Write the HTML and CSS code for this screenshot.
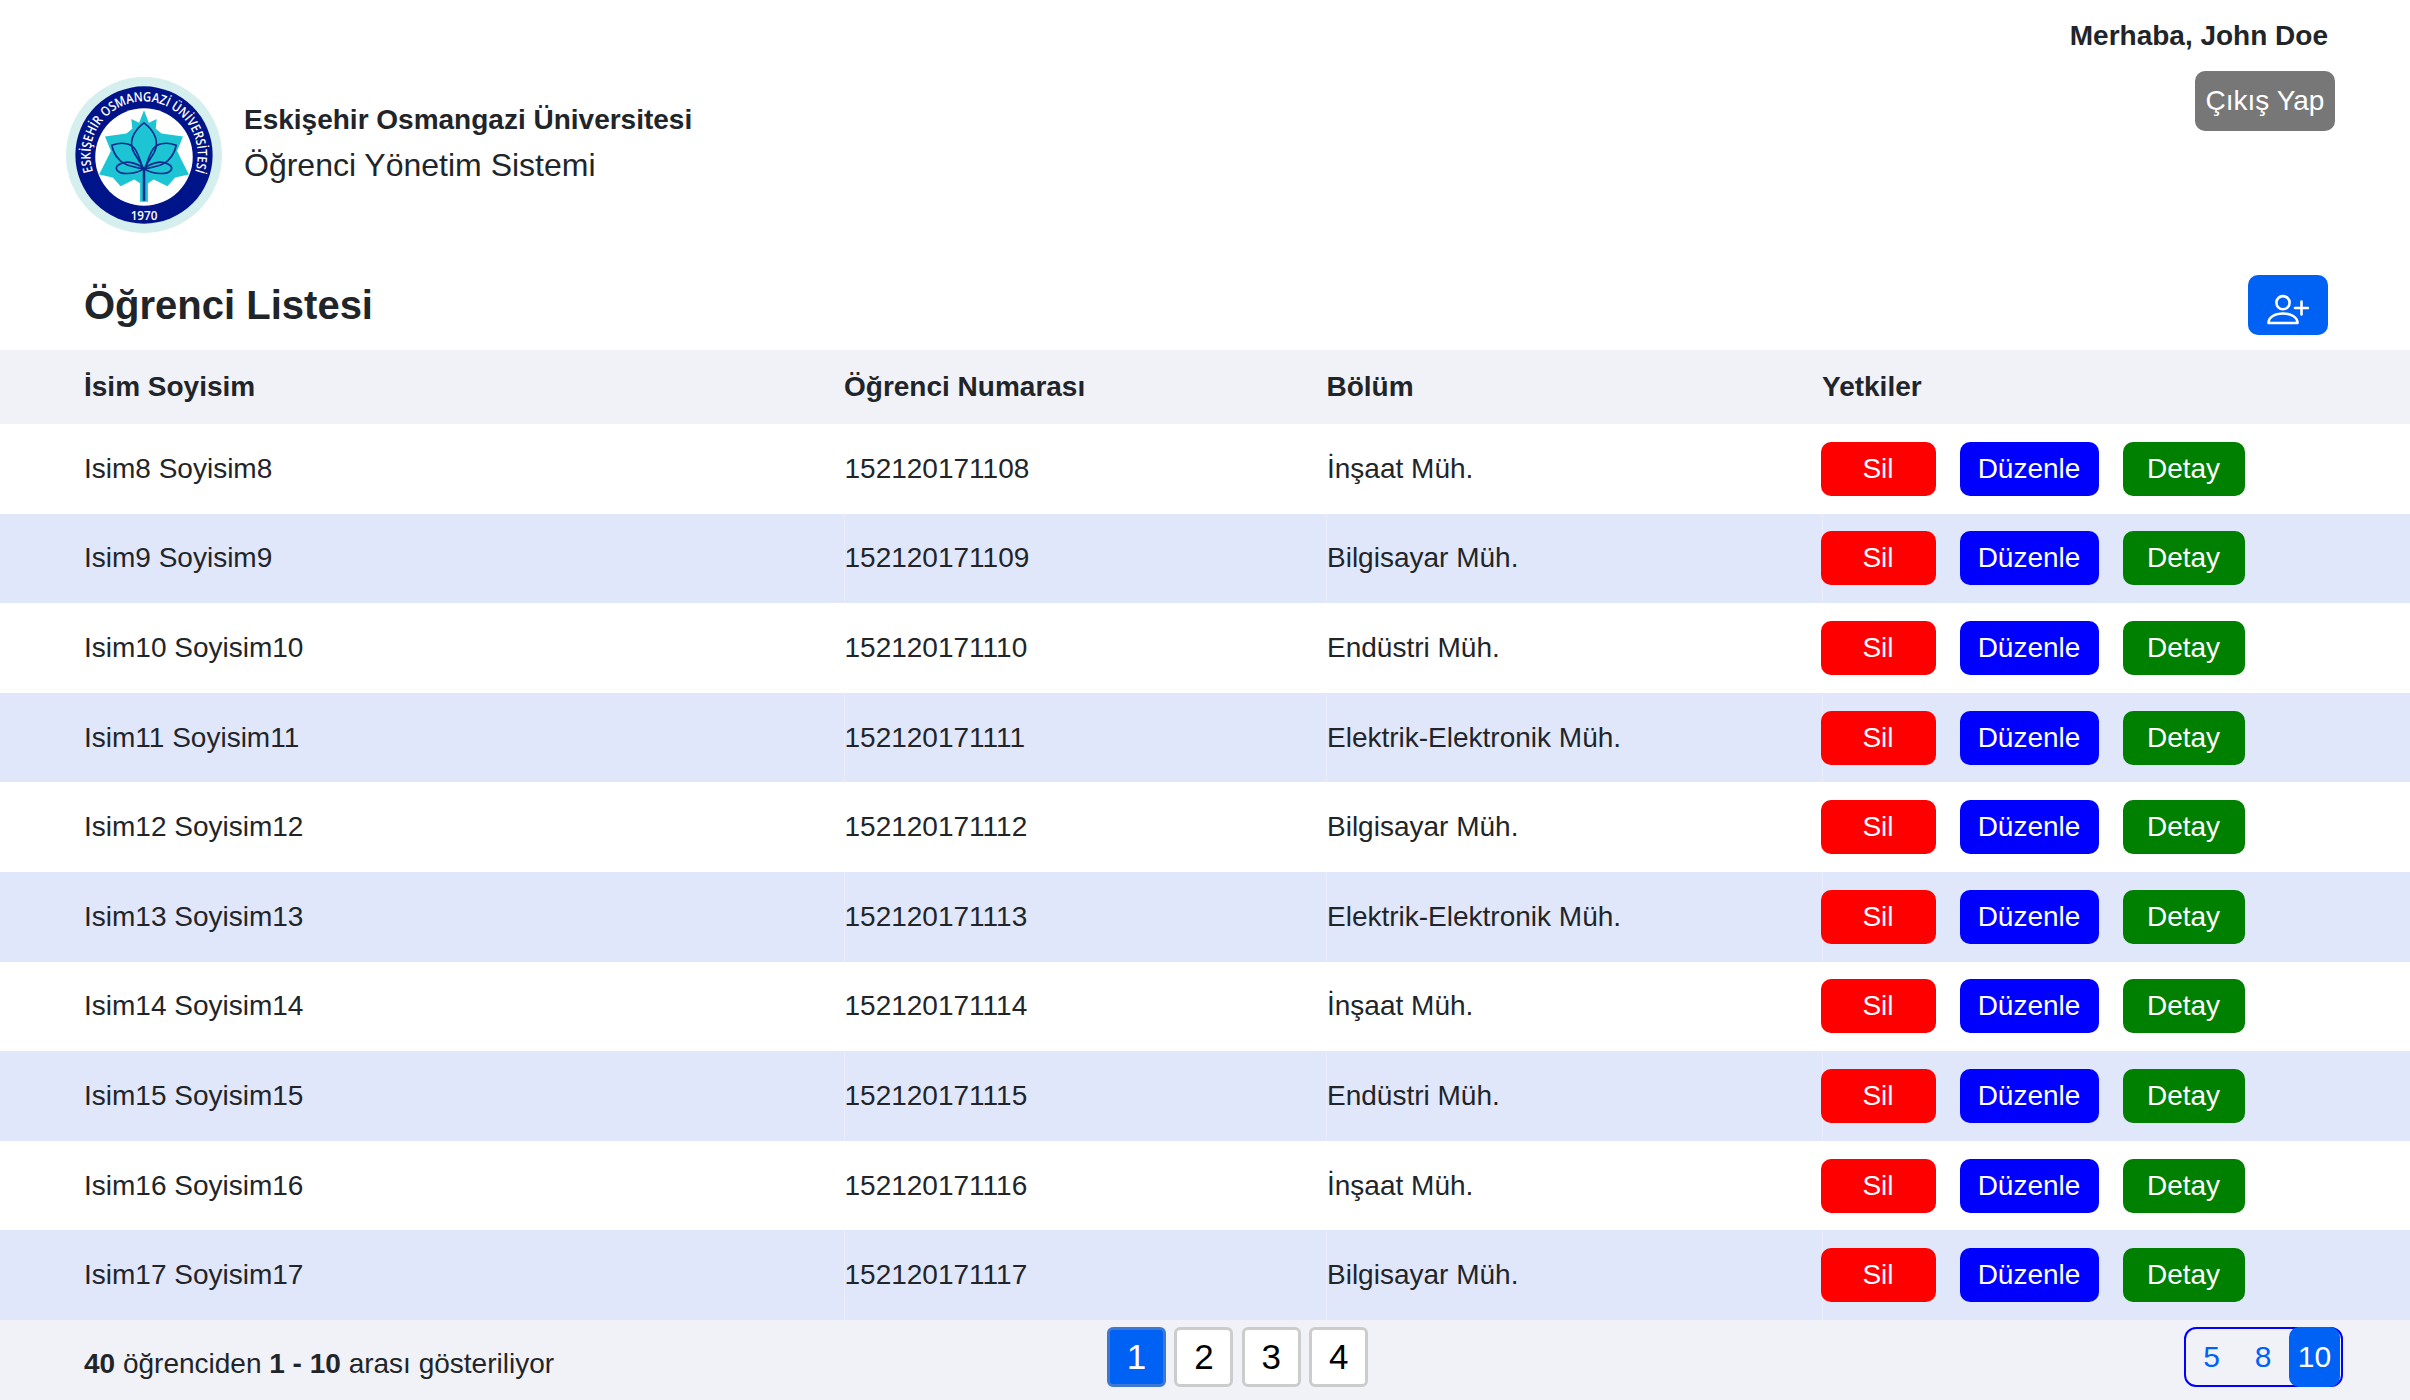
FILE: index.html
```html
<!DOCTYPE html>
<html lang="tr">
<head>
<meta charset="utf-8">
<title>Öğrenci Yönetim Sistemi</title>
<link rel="stylesheet" href="styles.css">
</head>
<body>
<header class="top">
  <div class="brand">
    <svg class="logo" viewBox="0 0 160 160" width="156" height="156" aria-hidden="true">
      <defs>
        <path id="arc" d="M27.7 97 A55 55 0 1 1 132.3 97"/>
      </defs>
      <circle cx="80" cy="80" r="80" fill="#d5efee"/>
      <circle cx="80" cy="80" r="70.4" fill="#00148a"/>
      <circle cx="80" cy="82" r="50" fill="#fff"/>
      <text class="logo-arc"><textPath href="#arc" startOffset="0" textLength="207" lengthAdjust="spacingAndGlyphs">ESKİŞEHİR OSMANGAZİ ÜNİVERSİTESİ</textPath></text>
      <text class="logo-year" x="80" y="147" text-anchor="middle">1970</text>
      <path fill="#1cc4d4" d="M80 34 L85 47 L93 43 L92 53 L98 58 L120 61 L114 76 L118 84 L126 100 L112 103 L104 112 L90 105 L84 109 L84 128 L76 128 L76 109 L70 105 L56 112 L48 103 L34 100 L42 84 L46 76 L40 61 L62 58 L68 53 L67 43 L75 47 Z"/>
      <g fill="none" stroke="#0a2a8c" stroke-width="1.7">
        <path d="M80 47 C68 56 64 68 70 78 C74 85 78 90 80 95 C82 90 86 85 90 78 C96 68 92 56 80 47 Z"/>
        <path d="M47 70 C58 66 68 68 72 76 C76 84 78 90 78 94 C68 92 58 90 54 84 C50 80 48 75 47 70 Z"/>
        <path d="M113 70 C102 66 92 68 88 76 C84 84 82 90 82 94 C92 92 102 90 106 84 C110 80 112 75 113 70 Z"/>
        <path d="M80 94 C70 86 60 86 54 90 C49 93 52 99 62 99 C70 99 76 97 80 94 C84 97 90 99 98 99 C108 99 111 93 106 90 C100 86 90 86 80 94 Z"/>
        <path d="M80 94 V127" stroke-width="2.6"/>
      </g>
    </svg>
    <div class="brand-text">
      <div class="uni">Eskişehir Osmangazi Üniversitesi</div>
      <div class="sys">Öğrenci Yönetim Sistemi</div>
    </div>
  </div>
  <div class="user">
    <div class="hello">Merhaba, John Doe</div>
    <button class="logout">Çıkış Yap</button>
  </div>
</header>
<section class="title-row">
  <h1>Öğrenci Listesi</h1>
  <button class="add" aria-label="Öğrenci ekle">
    <svg viewBox="0 0 42 32" width="42" height="32" fill="none" stroke="#fff" stroke-width="2.6" stroke-linecap="round" aria-hidden="true">
      <circle cx="16" cy="9.7" r="6.6"/>
      <path d="M1.5 30 C1.5 24 8 20.5 16 20.5 C24 20.5 30.5 24 30.5 30 Z" stroke-linejoin="round"/>
      <path d="M28 15 H41 M34.5 8.5 V21.5"/>
    </svg>
  </button>
</section>
<table class="list">
  <thead>
    <tr><th class="c1">İsim Soyisim</th><th class="c2">Öğrenci Numarası</th><th class="c3">Bölüm</th><th class="c4">Yetkiler</th></tr>
  </thead>
  <tbody>
    <tr><td>Isim8 Soyisim8</td><td>152120171108</td><td>İnşaat Müh.</td><td><div class="acts"><button class="b del">Sil</button><button class="b edit">Düzenle</button><button class="b info">Detay</button></div></td></tr>
    <tr><td>Isim9 Soyisim9</td><td>152120171109</td><td>Bilgisayar Müh.</td><td><div class="acts"><button class="b del">Sil</button><button class="b edit">Düzenle</button><button class="b info">Detay</button></div></td></tr>
    <tr><td>Isim10 Soyisim10</td><td>152120171110</td><td>Endüstri Müh.</td><td><div class="acts"><button class="b del">Sil</button><button class="b edit">Düzenle</button><button class="b info">Detay</button></div></td></tr>
    <tr><td>Isim11 Soyisim11</td><td>152120171111</td><td>Elektrik-Elektronik Müh.</td><td><div class="acts"><button class="b del">Sil</button><button class="b edit">Düzenle</button><button class="b info">Detay</button></div></td></tr>
    <tr><td>Isim12 Soyisim12</td><td>152120171112</td><td>Bilgisayar Müh.</td><td><div class="acts"><button class="b del">Sil</button><button class="b edit">Düzenle</button><button class="b info">Detay</button></div></td></tr>
    <tr><td>Isim13 Soyisim13</td><td>152120171113</td><td>Elektrik-Elektronik Müh.</td><td><div class="acts"><button class="b del">Sil</button><button class="b edit">Düzenle</button><button class="b info">Detay</button></div></td></tr>
    <tr><td>Isim14 Soyisim14</td><td>152120171114</td><td>İnşaat Müh.</td><td><div class="acts"><button class="b del">Sil</button><button class="b edit">Düzenle</button><button class="b info">Detay</button></div></td></tr>
    <tr><td>Isim15 Soyisim15</td><td>152120171115</td><td>Endüstri Müh.</td><td><div class="acts"><button class="b del">Sil</button><button class="b edit">Düzenle</button><button class="b info">Detay</button></div></td></tr>
    <tr><td>Isim16 Soyisim16</td><td>152120171116</td><td>İnşaat Müh.</td><td><div class="acts"><button class="b del">Sil</button><button class="b edit">Düzenle</button><button class="b info">Detay</button></div></td></tr>
    <tr><td>Isim17 Soyisim17</td><td>152120171117</td><td>Bilgisayar Müh.</td><td><div class="acts"><button class="b del">Sil</button><button class="b edit">Düzenle</button><button class="b info">Detay</button></div></td></tr>
  </tbody>
</table>
<footer class="foot">
  <div class="summary"><b>40</b> öğrenciden <b>1 - 10</b> arası gösteriliyor</div>
  <nav class="pages">
    <button class="pg on">1</button><button class="pg">2</button><button class="pg">3</button><button class="pg">4</button>
  </nav>
  <div class="sizes"><span class="sz">5</span><span class="sz">8</span><span class="sz on">10</span></div>
</footer>
</body>
</html>
```
FILE: styles.css
```css
* { box-sizing: border-box; }
html, body { margin: 0; padding: 0; height: 1400px; overflow: hidden; }
body { background: #fff; color: #212529; font-family: "Liberation Sans", Arial, sans-serif; font-size: 28px; }
button { font-family: inherit; border: 0; cursor: pointer; }

.top { height: 268px; display: flex; justify-content: space-between; padding: 20px 75px 0 66px; }
.brand { display: flex; align-items: center; gap: 22px; height: 156px; margin-top: 57px; }
.logo { flex: none; }
.logo-arc { font-size: 13.5px; font-weight: 600; fill: #fff; font-family: "Open Sans", "Liberation Sans", sans-serif; }
.logo-year { font-size: 12px; font-weight: 600; fill: #fff; font-family: "Open Sans", "Liberation Sans", sans-serif; }
.brand-text { margin-bottom: 22px; }
.uni { font-size: 28px; font-weight: 700; line-height: 40px; }
.sys { font-size: 32px; line-height: 46px; margin-top: 2px; }
.user { display: flex; flex-direction: column; align-items: flex-end; }
.hello { font-size: 28px; font-weight: 700; line-height: 32px; margin-right: 7px; }
.logout { margin-top: 19px; width: 140px; height: 60px; background: #777; color: #fff; font-size: 28px; border-radius: 10px; padding: 0; }

.title-row { height: 82px; display: flex; justify-content: space-between; align-items: flex-start; padding: 7px 82px 0 84px; }
h1 { margin: 0; font-size: 40px; font-weight: 700; line-height: 60px; color: #212529; }
.add { width: 80px; height: 60px; background: #0062f5; border-radius: 10px; display: flex; align-items: center; justify-content: center; padding: 8px 0 0; }

.list { width: 100%; border-collapse: collapse; table-layout: fixed; }
.list th { height: 74px; padding: 0; text-align: left; background: #f1f2f8; font-size: 28px; font-weight: 700; }
.list td { height: 89.6px; padding: 0; font-size: 28px; vertical-align: middle; }
.c1 { width: 844px; }
.c2 { width: 482.5px; }
.c3 { width: 495.5px; }
.list th:first-child, .list td:first-child { padding-left: 84px; }
.list tbody tr:nth-child(even) td { background: #e1e7fb; }
.list td + td { border-left: 1px solid transparent; }
.list tbody tr:nth-child(even) td + td { border-left-color: #e9edfb; }

.acts { display: flex; gap: 24px; margin-left: -2px; }
.b { height: 54px; color: #fff; font-size: 28px; border-radius: 10px; padding: 0; }
.del { width: 115px; background: #f00; }
.edit { width: 139px; background: #00f; }
.info { width: 122px; background: #008000; }

.foot { height: 80px; background: #f1f2f8; display: grid; grid-template-columns: 1023px auto 1fr; padding: 7px 67px 0 84px; }
.summary { font-size: 28px; line-height: 74px; color: #212529; }
.summary b { font-weight: 700; }
.pages { display: flex; gap: 8.4px; }
.pg { width: 59px; height: 60px; background: #fff; color: #000; font-size: 35px; border: 3px solid #ccc; border-radius: 6px; padding: 0; }
.pg.on { background: #0062f5; border-color: #3f78d0; color: #fff; }
.sizes { justify-self: end; display: flex; width: 159px; height: 60px; border: 2px solid #00f; border-radius: 12px; }
.sz { flex: none; width: 51px; display: flex; align-items: center; justify-content: center; color: #0062f5; font-size: 30px; }
.sz:nth-child(2) { width: 52px; }
.sz.on { margin: -2px 0; background: #0062f5; color: #fff; border-radius: 10px; }
```
